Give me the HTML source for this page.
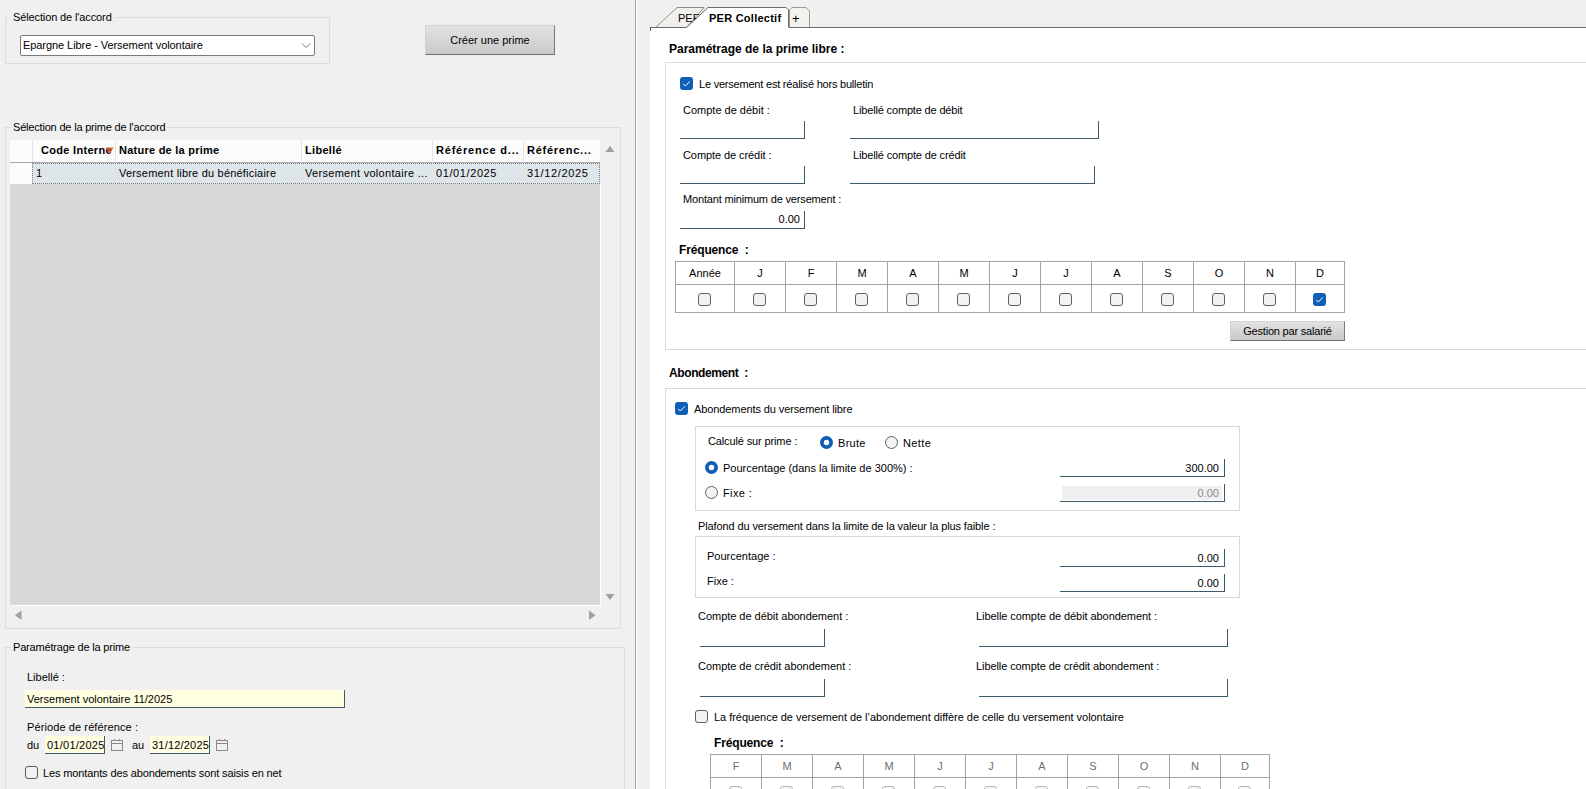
<!DOCTYPE html>
<html><head><meta charset="utf-8">
<style>
html,body{margin:0;padding:0;}
body{width:1586px;height:789px;overflow:hidden;position:relative;background:#f0f0f0;font-family:"Liberation Sans",sans-serif;font-size:11px;color:#000;}
.a{position:absolute;}
.t{position:absolute;white-space:nowrap;line-height:13px;font-size:11px;}
.b{font-weight:bold;font-size:12px;line-height:14px;}
.gb{position:absolute;border:1px solid #dcdcdc;box-sizing:border-box;}
.leg{position:absolute;white-space:nowrap;line-height:13px;background:#f0f0f0;padding:0 2px;}
.inp{position:absolute;box-sizing:border-box;border-right:1px solid #3f5a68;border-bottom:1px solid #3f5a68;}
.box{position:absolute;box-sizing:border-box;border:1px solid #d9d9d9;}
.cbk{position:absolute;width:13px;height:13px;box-sizing:border-box;border-radius:3px;background:#0f5fb7;}
.cbu{position:absolute;width:13px;height:13px;box-sizing:border-box;border-radius:3px;border:1px solid #5f5f5f;background:#f3f3f3;}
.cbd{position:absolute;width:13px;height:13px;box-sizing:border-box;border-radius:3px;border:1px solid #b5b5b5;background:#f7f7f7;}
.btn{position:absolute;box-sizing:border-box;border:1px solid #d2d2d2;border-right-color:#7a7a7a;border-bottom-color:#6e6e6e;background:linear-gradient(#e2e2e2,#c9c9c9);text-align:center;white-space:nowrap;}
.r{text-align:right;}
</style></head>
<body>
<!-- ============ LEFT PANE ============ -->
<!-- group 1 -->
<div class="gb" style="left:5px;top:17px;width:325px;height:47px;"></div>
<div class="leg" style="left:11px;top:11px;letter-spacing:-0.12px;">Sélection de l'accord</div>
<div class="a" style="left:20px;top:35px;width:295px;height:21px;box-sizing:border-box;border:1px solid #7a7a7a;border-radius:2px;background:#fff;"></div>
<div class="t" style="left:23px;top:39px;letter-spacing:-0.07px;">Epargne Libre - Versement volontaire</div>
<svg class="a" style="left:300px;top:41px" width="12" height="9"><path d="M2 2.5 L6 6.5 L10 2.5" fill="none" stroke="#666" stroke-width="0.9"/></svg>
<div class="btn" style="left:425px;top:25px;width:130px;height:30px;line-height:28px;">Créer une prime</div>

<!-- group 2 -->
<div class="gb" style="left:5px;top:127px;width:616px;height:502px;"></div>
<div class="leg" style="left:11px;top:121px;letter-spacing:-0.19px;">Sélection de la prime de l'accord</div>
<!-- grid -->
<div class="a" style="left:10px;top:140px;width:590px;height:22px;background:#fbfbfb;"></div>
<div class="a" style="left:10px;top:162px;width:590px;height:1px;background:#a9a9a9;"></div>
<div class="a" style="left:10px;top:163px;width:22px;height:21px;background:#fbfbfb;"></div>
<div class="a" style="left:32px;top:163px;width:568px;height:21px;background:#dfe6ea;"></div>
<div class="a" style="left:10px;top:184px;width:590px;height:421px;background:#d8d8d8;border-right:1px solid #fff;border-bottom:1px solid #fff;"></div>
<!-- header separators -->
<div class="a" style="left:32px;top:140px;width:1px;height:22px;background:#e3e3e3;"></div>
<div class="a" style="left:115px;top:140px;width:1px;height:44px;background:#e3e3e3;"></div>
<div class="a" style="left:301px;top:140px;width:1px;height:44px;background:#e3e3e3;"></div>
<div class="a" style="left:432px;top:140px;width:1px;height:44px;background:#e3e3e3;"></div>
<div class="a" style="left:523px;top:140px;width:1px;height:44px;background:#e3e3e3;"></div>
<div class="a" style="left:32px;top:163px;width:568px;height:21px;box-sizing:border-box;border:1px dotted #7c7c7c;"></div>
<div class="t" style="left:41px;top:144px;font-weight:bold;letter-spacing:0.3px;">Code Interne</div>
<svg class="a" style="left:105px;top:147px" width="9" height="9"><path d="M0.5 0.5 L8.5 0.5 L4.5 7.5 Z" fill="#d2512a" fill-opacity="0.85"/></svg>
<div class="t" style="left:119px;top:144px;font-weight:bold;letter-spacing:0.25px;">Nature de la prime</div>
<div class="t" style="left:305px;top:144px;font-weight:bold;letter-spacing:0.3px;">Libellé</div>
<div class="t" style="left:436px;top:144px;font-weight:bold;letter-spacing:0.8px;">Référence d...</div>
<div class="t" style="left:527px;top:144px;font-weight:bold;letter-spacing:0.75px;">Référenc...</div>
<div class="t" style="left:36px;top:167px;">1</div>
<div class="t" style="left:119px;top:167px;letter-spacing:0.2px;">Versement libre du bénéficiaire</div>
<div class="t" style="left:305px;top:167px;letter-spacing:0.3px;">Versement volontaire ...</div>
<div class="t" style="left:436px;top:167px;letter-spacing:0.6px;">01/01/2025</div>
<div class="t" style="left:527px;top:167px;letter-spacing:0.65px;">31/12/2025</div>
<!-- scroll arrows -->
<svg class="a" style="left:605px;top:145px" width="11" height="8"><path d="M0.5 7 L5 1 L9.5 7 Z" fill="#a0a0a0"/></svg>
<svg class="a" style="left:605px;top:593px" width="11" height="8"><path d="M0.5 1 L9.5 1 L5 7 Z" fill="#a0a0a0"/></svg>
<svg class="a" style="left:14px;top:610px" width="9" height="11"><path d="M7.5 0.5 L7.5 10 L1 5.25 Z" fill="#a0a0a0"/></svg>
<svg class="a" style="left:588px;top:610px" width="9" height="11"><path d="M1 0.5 L1 10 L7.5 5.25 Z" fill="#a0a0a0"/></svg>

<!-- group 3 -->
<div class="gb" style="left:5px;top:647px;width:620px;height:160px;"></div>
<div class="leg" style="left:11px;top:641px;letter-spacing:-0.18px;">Paramétrage de la prime</div>
<div class="t" style="left:27px;top:671px;">Libellé :</div>
<div class="inp" style="left:25px;top:690px;width:320px;height:18px;background:#ffffe1;"></div>
<div class="t" style="left:27px;top:693px;">Versement volontaire 11/2025</div>
<div class="t" style="left:27px;top:721px;letter-spacing:0.1px;">Période de référence :</div>
<div class="t" style="left:27px;top:739px;">du</div>
<div class="inp" style="left:45px;top:736px;width:60px;height:18px;background:#ffffe1;"></div>
<div class="t" style="left:47px;top:739px;letter-spacing:0.25px;">01/01/2025</div>
<svg class="a" style="left:110px;top:738px" width="14" height="14"><rect x="1.5" y="2.5" width="11" height="10" fill="none" stroke="#8a8a8a"/><line x1="1.5" y1="5.5" x2="12.5" y2="5.5" stroke="#8a8a8a"/><line x1="4.5" y1="1" x2="4.5" y2="3" stroke="#8a8a8a"/><line x1="9.5" y1="1" x2="9.5" y2="3" stroke="#8a8a8a"/></svg>
<div class="t" style="left:132px;top:739px;">au</div>
<div class="inp" style="left:150px;top:736px;width:60px;height:18px;background:#ffffe1;"></div>
<div class="t" style="left:152px;top:739px;letter-spacing:0.2px;">31/12/2025</div>
<svg class="a" style="left:215px;top:738px" width="14" height="14"><rect x="1.5" y="2.5" width="11" height="10" fill="none" stroke="#8a8a8a"/><line x1="1.5" y1="5.5" x2="12.5" y2="5.5" stroke="#8a8a8a"/><line x1="4.5" y1="1" x2="4.5" y2="3" stroke="#8a8a8a"/><line x1="9.5" y1="1" x2="9.5" y2="3" stroke="#8a8a8a"/></svg>
<div class="a" style="left:25px;top:766px;width:13px;height:13px;box-sizing:border-box;border:1px solid #5a5a5a;border-radius:3px;background:#f2f2f2;"></div>
<div class="t" style="left:43px;top:767px;letter-spacing:-0.13px;">Les montants des abondements sont saisis en net</div>

<!-- separator -->
<div class="a" style="left:635px;top:0;width:1px;height:789px;background:#a0a0a0;"></div><div class="a" style="left:636px;top:0;width:1px;height:789px;background:#fff;"></div>

<!-- ============ RIGHT PANE ============ -->
<div class="a" style="left:650px;top:27px;width:936px;height:762px;background:#fff;"></div>
<!-- tabs -->
<svg class="a" style="left:640px;top:0" width="190" height="32">
  <path d="M15.5 27.5 L37 7.5 L64 7.5 L46.5 27.5 Z" fill="#f2f0eb" stroke="#8e8e8e"/>
  <path d="M10 27.5 L46.5 27.5" stroke="#6a6a6a"/>
  <path d="M10.5 27 L10.5 31" stroke="#6a6a6a"/>
</svg>
<div class="t" style="left:678px;top:12px;">PEF</div>
<svg class="a" style="left:640px;top:0" width="190" height="32">
  <path d="M46.5 27.5 L68 7.5 L146 7.5 L148.5 10 L148.5 27.5 L46.5 27.5 Z" fill="#fff" stroke="none"/>
  <path d="M46.5 27.5 L68 7.5 L146 7.5 L148.5 10 L148.5 27.5" fill="none" stroke="#6a6a6a"/>
  <path d="M149.5 27.5 L149.5 10 L152 7.5 L166 7.5 L169.5 11 L169.5 27.5 Z" fill="#f4f2ed" stroke="#9a9a90"/>
  <path d="M149 27.5 L190 27.5" stroke="#6a6a6a"/>
</svg>
<div class="a" style="left:830px;top:27px;width:756px;height:1px;background:#6a6a6a;"></div>
<div class="t" style="left:709px;top:12px;font-weight:bold;letter-spacing:0.25px;">PER Collectif</div>
<div class="t" style="left:792px;top:12px;font-size:13px;">+</div>

<div class="t b" style="left:669px;top:42px;">Paramétrage de la prime libre :</div>
<div class="box" style="left:665px;top:62px;width:930px;height:288px;"></div>
<div class="cbk" style="left:680px;top:77px;"><svg width="13" height="13" style="position:absolute;left:0;top:0"><path d="M3.2 6.8 L5.4 9 L9.8 4.4" fill="none" stroke="#fff" stroke-width="1"/></svg></div>
<div class="t" style="left:699px;top:78px;letter-spacing:-0.21px;">Le versement est réalisé hors bulletin</div>
<div class="t" style="left:683px;top:104px;">Compte de débit :</div>
<div class="t" style="left:853px;top:104px;letter-spacing:-0.16px;">Libellé compte de débit</div>
<div class="inp" style="left:680px;top:121px;width:125px;height:18px;"></div>
<div class="inp" style="left:850px;top:121px;width:249px;height:18px;"></div>
<div class="t" style="left:683px;top:149px;letter-spacing:-0.08px;">Compte de crédit :</div>
<div class="t" style="left:853px;top:149px;letter-spacing:-0.15px;">Libellé compte de crédit</div>
<div class="inp" style="left:680px;top:166px;width:125px;height:18px;"></div>
<div class="inp" style="left:850px;top:166px;width:245px;height:18px;"></div>
<div class="t" style="left:683px;top:193px;letter-spacing:-0.17px;">Montant minimum de versement :</div>
<div class="inp" style="left:680px;top:211px;width:125px;height:18px;"></div>
<div class="t r" style="left:700px;top:213px;width:100px;">0.00</div>

<div class="t b" style="left:679px;top:243px;letter-spacing:-0.15px;">Fréquence&nbsp; :</div>
<!-- table 1 -->
<div class="a" style="left:675px;top:261px;width:670px;height:1px;background:#a3a3a3;"></div>
<div class="a" style="left:675px;top:284px;width:670px;height:1px;background:#a3a3a3;"></div>
<div class="a" style="left:675px;top:312px;width:670px;height:1px;background:#a3a3a3;"></div>
<div class="a" style="left:675px;top:261px;width:1px;height:52px;background:#a3a3a3;"></div>
<div class="a" style="left:734px;top:261px;width:1px;height:52px;background:#a3a3a3;"></div>
<div class="a" style="left:785px;top:261px;width:1px;height:52px;background:#a3a3a3;"></div>
<div class="a" style="left:836px;top:261px;width:1px;height:52px;background:#a3a3a3;"></div>
<div class="a" style="left:887px;top:261px;width:1px;height:52px;background:#a3a3a3;"></div>
<div class="a" style="left:938px;top:261px;width:1px;height:52px;background:#a3a3a3;"></div>
<div class="a" style="left:989px;top:261px;width:1px;height:52px;background:#a3a3a3;"></div>
<div class="a" style="left:1040px;top:261px;width:1px;height:52px;background:#a3a3a3;"></div>
<div class="a" style="left:1091px;top:261px;width:1px;height:52px;background:#a3a3a3;"></div>
<div class="a" style="left:1142px;top:261px;width:1px;height:52px;background:#a3a3a3;"></div>
<div class="a" style="left:1193px;top:261px;width:1px;height:52px;background:#a3a3a3;"></div>
<div class="a" style="left:1244px;top:261px;width:1px;height:52px;background:#a3a3a3;"></div>
<div class="a" style="left:1295px;top:261px;width:1px;height:52px;background:#a3a3a3;"></div>
<div class="a" style="left:1344px;top:261px;width:1px;height:52px;background:#a3a3a3;"></div>
<div class="t" style="left:676px;top:267px;width:58px;text-align:center;color:#000;">Année</div>
<div class="cbu" style="left:698px;top:293px;"></div>
<div class="t" style="left:735px;top:267px;width:50px;text-align:center;color:#000;">J</div>
<div class="cbu" style="left:753px;top:293px;"></div>
<div class="t" style="left:786px;top:267px;width:50px;text-align:center;color:#000;">F</div>
<div class="cbu" style="left:804px;top:293px;"></div>
<div class="t" style="left:837px;top:267px;width:50px;text-align:center;color:#000;">M</div>
<div class="cbu" style="left:855px;top:293px;"></div>
<div class="t" style="left:888px;top:267px;width:50px;text-align:center;color:#000;">A</div>
<div class="cbu" style="left:906px;top:293px;"></div>
<div class="t" style="left:939px;top:267px;width:50px;text-align:center;color:#000;">M</div>
<div class="cbu" style="left:957px;top:293px;"></div>
<div class="t" style="left:990px;top:267px;width:50px;text-align:center;color:#000;">J</div>
<div class="cbu" style="left:1008px;top:293px;"></div>
<div class="t" style="left:1041px;top:267px;width:50px;text-align:center;color:#000;">J</div>
<div class="cbu" style="left:1059px;top:293px;"></div>
<div class="t" style="left:1092px;top:267px;width:50px;text-align:center;color:#000;">A</div>
<div class="cbu" style="left:1110px;top:293px;"></div>
<div class="t" style="left:1143px;top:267px;width:50px;text-align:center;color:#000;">S</div>
<div class="cbu" style="left:1161px;top:293px;"></div>
<div class="t" style="left:1194px;top:267px;width:50px;text-align:center;color:#000;">O</div>
<div class="cbu" style="left:1212px;top:293px;"></div>
<div class="t" style="left:1245px;top:267px;width:50px;text-align:center;color:#000;">N</div>
<div class="cbu" style="left:1263px;top:293px;"></div>
<div class="t" style="left:1296px;top:267px;width:48px;text-align:center;color:#000;">D</div>
<div class="cbk" style="left:1313px;top:293px;"><svg width="13" height="13" style="position:absolute;left:0;top:0"><path d="M3.2 6.8 L5.4 9 L9.8 4.4" fill="none" stroke="#fff" stroke-width="1"/></svg></div>
<div class="btn" style="left:1230px;top:321px;width:115px;height:20px;line-height:18px;letter-spacing:-0.2px;">Gestion par salarié</div>

<div class="t b" style="left:669px;top:366px;letter-spacing:-0.4px;">Abondement&nbsp; :</div>
<div class="box" style="left:665px;top:388px;width:930px;height:450px;"></div>
<div class="cbk" style="left:675px;top:402px;"><svg width="13" height="13" style="position:absolute;left:0;top:0"><path d="M3.2 6.8 L5.4 9 L9.8 4.4" fill="none" stroke="#fff" stroke-width="1"/></svg></div>
<div class="t" style="left:694px;top:403px;letter-spacing:-0.1px;">Abondements du versement libre</div>

<div class="box" style="left:695px;top:426px;width:545px;height:85px;"></div>
<div class="t" style="left:708px;top:435px;letter-spacing:-0.13px;">Calculé sur prime :</div>
<svg class="a" style="left:820px;top:436px" width="13" height="13"><circle cx="6.5" cy="6.5" r="6.5" fill="#0f5fb7"/><circle cx="6.5" cy="6.5" r="2.7" fill="#fff"/></svg>
<div class="t" style="left:838px;top:437px;letter-spacing:0.3px;">Brute</div>
<svg class="a" style="left:885px;top:436px" width="13" height="13"><circle cx="6.5" cy="6.5" r="6" fill="#f3f3f3" stroke="#5f5f5f"/></svg>
<div class="t" style="left:903px;top:437px;letter-spacing:0.4px;">Nette</div>
<svg class="a" style="left:705px;top:461px" width="13" height="13"><circle cx="6.5" cy="6.5" r="6.5" fill="#0f5fb7"/><circle cx="6.5" cy="6.5" r="2.7" fill="#fff"/></svg>
<div class="t" style="left:723px;top:462px;">Pourcentage (dans la limite de 300%) :</div>
<svg class="a" style="left:705px;top:486px" width="13" height="13"><circle cx="6.5" cy="6.5" r="6" fill="#f3f3f3" stroke="#5f5f5f"/></svg>
<div class="t" style="left:723px;top:487px;letter-spacing:0.4px;">Fixe :</div>
<div class="inp" style="left:1060px;top:459px;width:165px;height:18px;"></div>
<div class="t r" style="left:1100px;top:462px;width:119px;">300.00</div>
<div class="inp" style="left:1060px;top:484px;width:165px;height:18px;"></div>
<div class="a" style="left:1062px;top:486px;width:160px;height:14px;background:#f0f0f0;"></div>
<div class="t r" style="left:1100px;top:487px;width:119px;color:#8c8c8c;">0.00</div>

<div class="t" style="left:698px;top:520px;letter-spacing:-0.11px;">Plafond du versement dans la limite de la valeur la plus faible :</div>
<div class="box" style="left:695px;top:536px;width:545px;height:62px;"></div>
<div class="t" style="left:707px;top:550px;">Pourcentage :</div>
<div class="t" style="left:707px;top:575px;">Fixe :</div>
<div class="inp" style="left:1060px;top:549px;width:165px;height:18px;"></div>
<div class="t r" style="left:1100px;top:552px;width:119px;">0.00</div>
<div class="inp" style="left:1060px;top:574px;width:165px;height:18px;"></div>
<div class="t r" style="left:1100px;top:577px;width:119px;">0.00</div>

<div class="t" style="left:698px;top:610px;letter-spacing:-0.03px;">Compte de débit abondement :</div>
<div class="t" style="left:976px;top:610px;letter-spacing:-0.07px;">Libelle compte de débit abondement :</div>
<div class="inp" style="left:700px;top:629px;width:125px;height:18px;"></div>
<div class="inp" style="left:979px;top:629px;width:249px;height:18px;"></div>
<div class="t" style="left:698px;top:660px;letter-spacing:-0.03px;">Compte de crédit abondement :</div>
<div class="t" style="left:976px;top:660px;letter-spacing:-0.09px;">Libelle compte de crédit abondement :</div>
<div class="inp" style="left:700px;top:679px;width:125px;height:18px;"></div>
<div class="inp" style="left:979px;top:679px;width:249px;height:18px;"></div>

<div class="cbu" style="left:695px;top:710px;"></div>
<div class="t" style="left:714px;top:711px;letter-spacing:-0.04px;">La fréquence de versement de l’abondement diffère de celle du versement volontaire</div>
<div class="t b" style="left:714px;top:736px;letter-spacing:-0.15px;">Fréquence&nbsp; :</div>

<div class="a" style="left:710px;top:754px;width:560px;height:1px;background:#a3a3a3;"></div>
<div class="a" style="left:710px;top:777px;width:560px;height:1px;background:#a3a3a3;"></div>
<div class="a" style="left:710px;top:806px;width:560px;height:1px;background:#a3a3a3;"></div>
<div class="a" style="left:710px;top:754px;width:1px;height:53px;background:#a3a3a3;"></div>
<div class="a" style="left:761px;top:754px;width:1px;height:53px;background:#a3a3a3;"></div>
<div class="a" style="left:812px;top:754px;width:1px;height:53px;background:#a3a3a3;"></div>
<div class="a" style="left:863px;top:754px;width:1px;height:53px;background:#a3a3a3;"></div>
<div class="a" style="left:914px;top:754px;width:1px;height:53px;background:#a3a3a3;"></div>
<div class="a" style="left:965px;top:754px;width:1px;height:53px;background:#a3a3a3;"></div>
<div class="a" style="left:1016px;top:754px;width:1px;height:53px;background:#a3a3a3;"></div>
<div class="a" style="left:1067px;top:754px;width:1px;height:53px;background:#a3a3a3;"></div>
<div class="a" style="left:1118px;top:754px;width:1px;height:53px;background:#a3a3a3;"></div>
<div class="a" style="left:1169px;top:754px;width:1px;height:53px;background:#a3a3a3;"></div>
<div class="a" style="left:1220px;top:754px;width:1px;height:53px;background:#a3a3a3;"></div>
<div class="a" style="left:1269px;top:754px;width:1px;height:53px;background:#a3a3a3;"></div>
<div class="t" style="left:711px;top:760px;width:50px;text-align:center;color:#6d6d6d;">F</div>
<div class="cbd" style="left:729px;top:786px;"></div>
<div class="t" style="left:762px;top:760px;width:50px;text-align:center;color:#6d6d6d;">M</div>
<div class="cbd" style="left:780px;top:786px;"></div>
<div class="t" style="left:813px;top:760px;width:50px;text-align:center;color:#6d6d6d;">A</div>
<div class="cbd" style="left:831px;top:786px;"></div>
<div class="t" style="left:864px;top:760px;width:50px;text-align:center;color:#6d6d6d;">M</div>
<div class="cbd" style="left:882px;top:786px;"></div>
<div class="t" style="left:915px;top:760px;width:50px;text-align:center;color:#6d6d6d;">J</div>
<div class="cbd" style="left:933px;top:786px;"></div>
<div class="t" style="left:966px;top:760px;width:50px;text-align:center;color:#6d6d6d;">J</div>
<div class="cbd" style="left:984px;top:786px;"></div>
<div class="t" style="left:1017px;top:760px;width:50px;text-align:center;color:#6d6d6d;">A</div>
<div class="cbd" style="left:1035px;top:786px;"></div>
<div class="t" style="left:1068px;top:760px;width:50px;text-align:center;color:#6d6d6d;">S</div>
<div class="cbd" style="left:1086px;top:786px;"></div>
<div class="t" style="left:1119px;top:760px;width:50px;text-align:center;color:#6d6d6d;">O</div>
<div class="cbd" style="left:1137px;top:786px;"></div>
<div class="t" style="left:1170px;top:760px;width:50px;text-align:center;color:#6d6d6d;">N</div>
<div class="cbd" style="left:1188px;top:786px;"></div>
<div class="t" style="left:1221px;top:760px;width:48px;text-align:center;color:#6d6d6d;">D</div>
<div class="cbd" style="left:1238px;top:786px;"></div>
</body></html>
